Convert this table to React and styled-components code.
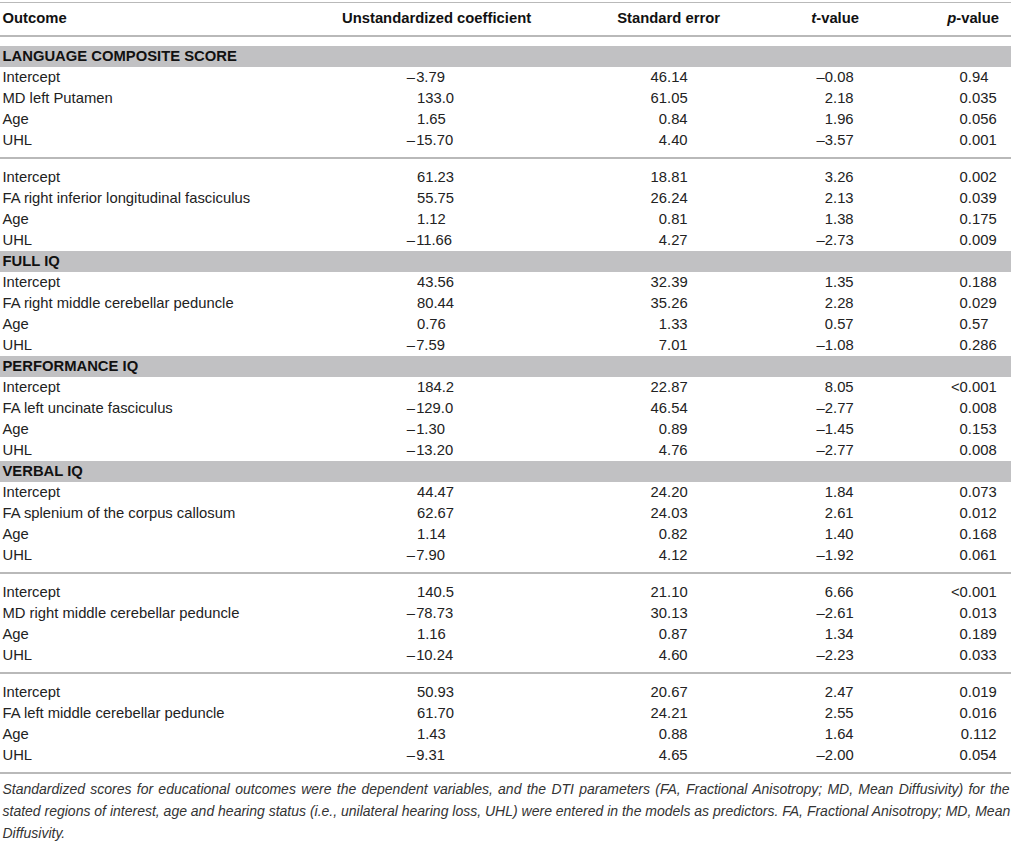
import React from 'react'
import styled, { createGlobalStyle, css } from 'styled-components'

const COLS = '340px 220px 170px 140px 141px'
const RULE = '#b9b9b9'
const DASH = '\u2013'

const GlobalStyle = createGlobalStyle`
  body {
    margin: 0;
    background: #ffffff;
    font-family: "Liberation Sans", Arial, Helvetica, sans-serif;
    color: #222222;
  }
`

const sections = [
  {
    title: 'LANGUAGE COMPOSITE SCORE',
    groups: [
      [
        ['Intercept', '-3.79', '46.14', '-0.08', '0.94'],
        ['MD left Putamen', '133.0', '61.05', '2.18', '0.035'],
        ['Age', '1.65', '0.84', '1.96', '0.056'],
        ['UHL', '-15.70', '4.40', '-3.57', '0.001'],
      ],
      [
        ['Intercept', '61.23', '18.81', '3.26', '0.002'],
        ['FA right inferior longitudinal fasciculus', '55.75', '26.24', '2.13', '0.039'],
        ['Age', '1.12', '0.81', '1.38', '0.175'],
        ['UHL', '-11.66', '4.27', '-2.73', '0.009'],
      ],
    ],
  },
  {
    title: 'FULL IQ',
    groups: [
      [
        ['Intercept', '43.56', '32.39', '1.35', '0.188'],
        ['FA right middle cerebellar peduncle', '80.44', '35.26', '2.28', '0.029'],
        ['Age', '0.76', '1.33', '0.57', '0.57'],
        ['UHL', '-7.59', '7.01', '-1.08', '0.286'],
      ],
    ],
  },
  {
    title: 'PERFORMANCE IQ',
    groups: [
      [
        ['Intercept', '184.2', '22.87', '8.05', '<0.001'],
        ['FA left uncinate fasciculus', '-129.0', '46.54', '-2.77', '0.008'],
        ['Age', '-1.30', '0.89', '-1.45', '0.153'],
        ['UHL', '-13.20', '4.76', '-2.77', '0.008'],
      ],
    ],
  },
  {
    title: 'VERBAL IQ',
    groups: [
      [
        ['Intercept', '44.47', '24.20', '1.84', '0.073'],
        ['FA splenium of the corpus callosum', '62.67', '24.03', '2.61', '0.012'],
        ['Age', '1.14', '0.82', '1.40', '0.168'],
        ['UHL', '-7.90', '4.12', '-1.92', '0.061'],
      ],
      [
        ['Intercept', '140.5', '21.10', '6.66', '<0.001'],
        ['MD right middle cerebellar peduncle', '-78.73', '30.13', '-2.61', '0.013'],
        ['Age', '1.16', '0.87', '1.34', '0.189'],
        ['UHL', '-10.24', '4.60', '-2.23', '0.033'],
      ],
      [
        ['Intercept', '50.93', '20.67', '2.47', '0.019'],
        ['FA left middle cerebellar peduncle', '61.70', '24.21', '2.55', '0.016'],
        ['Age', '1.43', '0.88', '1.64', '0.112'],
        ['UHL', '-9.31', '4.65', '-2.00', '0.054'],
      ],
    ],
  },
]

const dash = (v) => v.replace('-', DASH)
const decimals = (v) => (v.split('.')[1] || '').length

export default function App() {
  return (
    <>
      <GlobalStyle />
      <Page>
        <Table>
          <HeadRow>
            <HeadCell $pl="2.5px">Outcome</HeadCell>
            <HeadCell $pl="2px">Unstandardized coefficient</HeadCell>
            <HeadCell $right $pr="10px">Standard error</HeadCell>
            <HeadCell $right $pr="11px"><i>t</i>-value</HeadCell>
            <HeadCell $right $pr="12px"><i>p</i>-value</HeadCell>
          </HeadRow>

          <Body>
            {sections.map((section) => (
              <React.Fragment key={section.title}>
                <Band>{section.title}</Band>
                {section.groups.map((group, gi) => (
                  <Group key={gi} $divided={gi > 0}>
                    {group.map(([label, coef, se, t, p], ri) => (
                      <Row key={ri}>
                        <Label>{label}</Label>
                        <Coef>
                          {coef.startsWith('-') ? (
                            <>
                              <Minus>{DASH}</Minus>
                              {coef.slice(1)}
                            </>
                          ) : coef}
                        </Coef>
                        <Num $pr="42.4px">{dash(se)}</Num>
                        <Num $pr="16.4px">{dash(t)}</Num>
                        <Num $pr="14.4px" $short={decimals(p) < 3}>{p}</Num>
                      </Row>
                    ))}
                  </Group>
                ))}
              </React.Fragment>
            ))}
          </Body>
        </Table>

        <Note>
          <NoteLine $full>
            Standardized scores for educational outcomes were the dependent variables, and the DTI parameters (FA, Fractional Anisotropy; MD, Mean Diffusivity) for the
          </NoteLine>
          <NoteLine $full>
            stated regions of interest, age and hearing status (i.e., unilateral hearing loss, UHL) were entered in the models as predictors. FA, Fractional Anisotropy; MD, Mean
          </NoteLine>
          <NoteLine>Diffusivity.</NoteLine>
        </Note>
      </Page>
    </>
  )
}

const Page = styled.div`
  width: 1011px;
  padding-top: 2px;
`

const Table = styled.div`
  border-top: 1px solid ${RULE};
  border-bottom: 2px solid ${RULE};
  font-size: 14.8px;
`

const HeadRow = styled.div`
  display: grid;
  grid-template-columns: ${COLS};
  align-items: center;
  height: 29.5px;
  padding-bottom: 2.5px;
  border-bottom: 2px solid ${RULE};
  font-weight: bold;
  color: #111111;
`

const HeadCell = styled.div`
  white-space: nowrap;
  text-align: ${(p) => (p.$right ? 'right' : 'left')};
  padding-left: ${(p) => p.$pl || '0'};
  padding-right: ${(p) => p.$pr || '0'};

  i {
    font-style: italic;
  }
`

const Body = styled.div`
  padding-top: 8.5px;
  padding-bottom: 6px;
`

const Band = styled.div`
  height: 21px;
  display: flex;
  align-items: center;
  padding-left: 2.5px;
  background: #c1c1c3;
  font-weight: bold;
  color: #111111;
`

const Group = styled.div`
  ${(p) => p.$divided && css`
    margin-top: 6px;
    padding-top: 8px;
    border-top: 2px solid ${RULE};
  `}
`

const Row = styled.div`
  display: grid;
  grid-template-columns: ${COLS};
  align-items: center;
  height: 21px;
  white-space: nowrap;
`

const Label = styled.div`
  padding-left: 2.5px;
`

const Coef = styled.div`
  padding-left: 77px;
`

const Minus = styled.span`
  margin: 0 1.2px 0 -10.3px;
`

const Num = styled.div`
  text-align: right;
  padding-right: ${(p) => (p.$short ? `calc(${p.$pr} + 0.556em)` : p.$pr)};
`

const Note = styled.div`
  padding: 4px 0 0 2.5px;
  width: 1007px;
  font-size: 14px;
  font-style: italic;
  line-height: 22px;
  color: #333333;
`

const NoteLine = styled.div`
  white-space: nowrap;
  text-align: justify;
  text-align-last: ${(p) => (p.$full ? 'justify' : 'left')};
`
